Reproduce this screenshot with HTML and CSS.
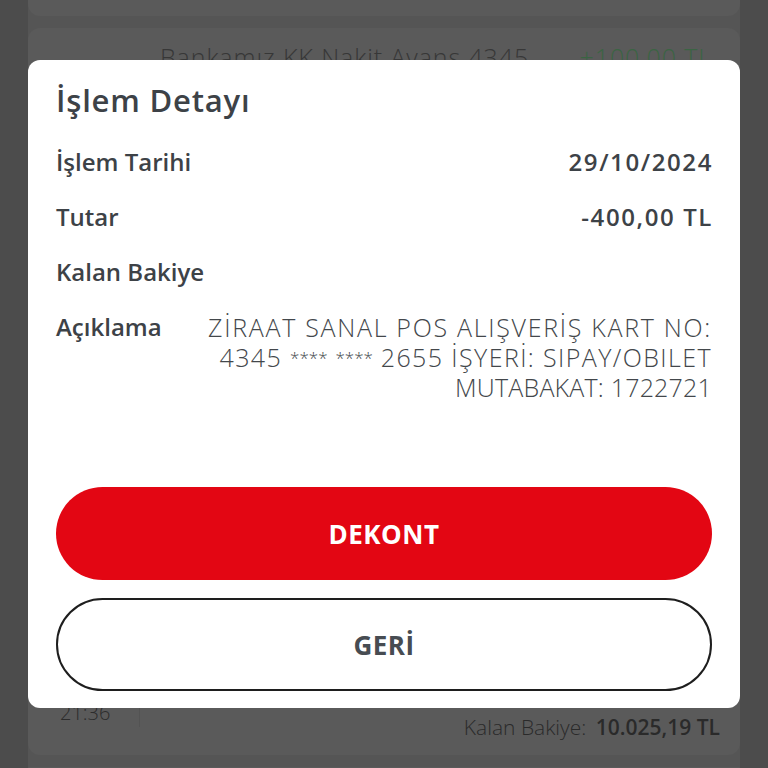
FILE: index.html
```html
<!DOCTYPE html>
<html lang="tr">
<head>
    <meta charset="UTF-8">
    <meta name="viewport" content="width=device-width, initial-scale=1.0">
    <title>İşlem Detayı</title>
    <link rel="stylesheet" href="styles.css">
</head>
<body>
    <div class="list">
        <div class="card card-top"></div>
        <div class="card card-main">
            <div class="tx-row">
                <span class="tx-name">Bankamız KK Nakit Avans 4345</span>
                <span class="tx-amount">+100,00 TL</span>
            </div>
            <div class="tx-foot">
                <div class="tx-time">21:36</div>
                <div class="tx-balance">Kalan Bakiye: <b>10.025,19 TL</b></div>
            </div>
        </div>
        <div class="card card-next"></div>
    </div>

    <div class="modal">
        <h1 class="modal-title">İşlem Detayı</h1>
        <div class="detail">
            <div class="detail-row">
                <span class="label">İşlem Tarihi</span>
                <span class="value">29/10/2024</span>
            </div>
            <div class="detail-row">
                <span class="label">Tutar</span>
                <span class="value">-400,00 TL</span>
            </div>
            <div class="detail-row">
                <span class="label">Kalan Bakiye</span>
                <span class="value hidden-value"></span>
            </div>
            <div class="detail-row">
                <span class="label">Açıklama</span>
                <div class="desc">
                    <div class="desc-line wide">ZİRAAT SANAL POS ALIŞVERİŞ KART NO:</div>
                    <div class="desc-line">4345 <span class="stars">****</span> <span class="stars">****</span> 2655 İŞYERİ: SIPAY/OBILET</div>
                    <div class="desc-line tight">MUTABAKAT: 1722721</div>
                </div>
            </div>
        </div>
        <div class="buttons">
            <button type="button" class="btn btn-red">DEKONT</button>
            <button type="button" class="btn btn-outline">GERİ</button>
        </div>
    </div>
</body>
</html>
```

FILE: styles.css
```css
body {
    margin: 0;
    padding: 0;
    background-color: #4c4c4c;
    font-family: "Open Sans", "Liberation Sans", sans-serif;
    height: 768px;
    overflow: hidden;
}
.list {
    margin: 0 28px;
    height: 768px;
    overflow: hidden;
    background-color: #555;
    display: flex;
    flex-direction: column;
    gap: 12px;
}
.card {
    background-color: #5a5a5a;
    border-radius: 12px;
    flex-shrink: 0;
}
.card-top {
    height: 16px;
    border-radius: 0 0 12px 12px;
}
.card-main {
    height: 727px;
    display: flex;
    flex-direction: column;
    justify-content: space-between;
}
.card-next {
    flex: 1;
    min-height: 0;
    border-radius: 12px 12px 0 0;
}
.tx-row {
    display: flex;
    justify-content: space-between;
    padding: 12px 28px 0 132px;
    font-weight: 300;
    font-size: 25px;
    letter-spacing: 0.9px;
    color: #373737;
}
.tx-amount {
    color: #3a6443;
}
.tx-foot {
    display: flex;
    justify-content: space-between;
    padding: 0 20px 14px 0;
    height: 60px;
}
.tx-time {
    width: 112px;
    box-sizing: border-box;
    margin-top: 20px;
    padding-left: 32px;
    font-size: 20px;
    font-weight: 300;
    color: #2c2c2c;
    border-right: 1px solid #535353;
    height: 26px;
    line-height: 24px;
}
.tx-balance {
    align-self: flex-end;
    font-size: 21px;
    font-weight: 300;
    color: #2a2a2a;
}
.tx-balance b {
    font-weight: 600;
    margin-left: 4px;
}
.modal {
    position: absolute;
    left: 28px;
    top: 60px;
    width: 712px;
    height: 648px;
    box-sizing: border-box;
    background-color: #fff;
    border-radius: 12px;
    padding: 20px 28px 0 28px;
    color: #3d4247;
}
.modal-title {
    margin: 0;
    font-size: 31px;
    font-weight: 600;
    letter-spacing: 0.8px;
    line-height: 40px;
}
.detail {
    margin-top: 27px;
    display: flex;
    flex-direction: column;
    gap: 25px;
}
.detail-row {
    display: flex;
    justify-content: space-between;
    align-items: flex-start;
    font-size: 24px;
    line-height: 30px;
}
.label {
    font-weight: 600;
    white-space: nowrap;
}
.value {
    font-weight: 600;
    letter-spacing: 1.6px;
    margin-right: -1px;
}
.hidden-value {
    width: 140px;
    height: 30px;
}
.desc {
    font-weight: 300;
    font-size: 25px;
    letter-spacing: 1.4px;
    text-align: right;
    white-space: nowrap;
    color: #43474b;
}
.desc-line.wide {
    letter-spacing: 1.7px;
}
.desc-line.tight {
    letter-spacing: 0.2px;
}
.stars {
    font-size: 17px;
    letter-spacing: 0;
    vertical-align: 3px;
    line-height: 1;
}
.buttons {
    margin-top: 85px;
    display: flex;
    flex-direction: column;
    gap: 18px;
}
.btn {
    height: 93px;
    border-radius: 47px;
    font-family: "Open Sans", "Liberation Sans", sans-serif;
    font-size: 26px;
    font-weight: 700;
    letter-spacing: 0.5px;
    cursor: pointer;
}
.btn-red {
    background-color: #e30613;
    color: #fff;
    border: none;
}
.btn-outline {
    background-color: #fff;
    color: #474c52;
    border: 2px solid #1e1e1e;
}
```
